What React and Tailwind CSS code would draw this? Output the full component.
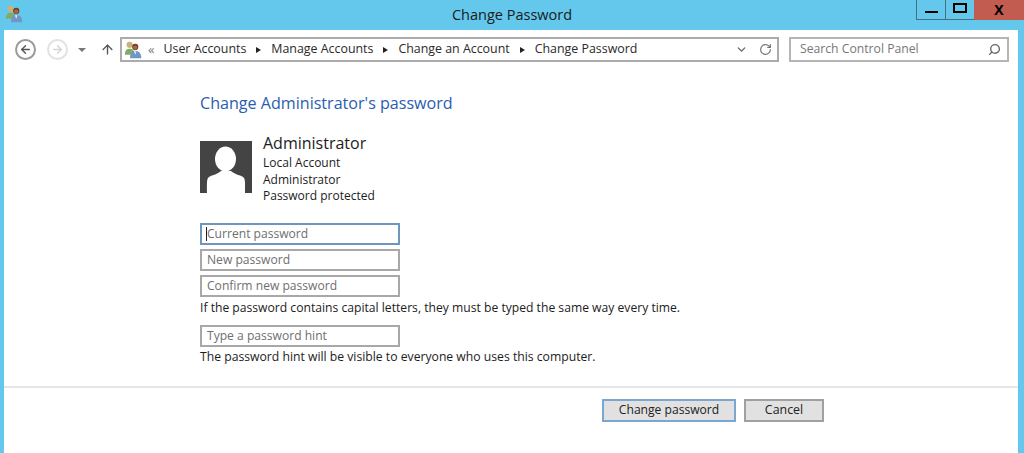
import React from 'react';
import { ArrowLeft, ArrowRight, ArrowUp, ChevronDown, RotateCw, Search } from 'lucide-react';

const UsersIcon = ({ size = 19 }) => (
  <svg width={size} height={size} viewBox="0 0 22 22">
    <circle cx="6.5" cy="5.5" r="3.6" fill="#c9b27a" />
    <path d="M1 17c0-5 2-7 5.5-7S12 12 12 17z" fill="#7fae62" />
    <circle cx="13" cy="8" r="3.6" fill="#6b3f28" />
    <circle cx="13" cy="8.8" r="2.5" fill="#a9683f" />
    <path d="M7 21c0-6 2.500-8.500 6-8.500S20 15 20 21z" fill="#6f96c4" />
    <path d="M11.500 13h3l-1.500 4z" fill="#e6eef6" />
  </svg>
);

const Avatar = () => (
  <svg width="52" height="52" viewBox="0 0 52 52" className="shrink-0">
    <rect width="52" height="52" fill="#444444" />
    <ellipse cx="25.500" cy="18" rx="10.500" ry="12.500" fill="#ffffff" />
    <path d="M7 52c0-5-.5-13 1-15 2-3 9-3 13-7h10c4 4 11 4 13 7 1.500 2 1 10 1 15z" fill="#ffffff" />
  </svg>
);

const Crumb = ({ children }) => (
  <>
    <span>{children}</span>
    <span className="mx-[10px] w-0 h-0 border-y-[3.5px] border-y-transparent border-l-[5px] border-l-[#222222]" />
  </>
);

const PasswordField = ({ placeholder, focused }) => (
  <div className="relative">
    <input
      type="text"
      placeholder={placeholder}
      className={`block w-[200px] h-[22px] px-[5px] bg-white border-2 text-[12.1px] outline-none placeholder:text-[#6f6f6f] ${focused ? 'border-[#6f96bd]' : 'border-[#a8a8a8]'}`}
    />
    {focused && <span className="absolute left-[6px] top-[4px] w-px h-[14px] bg-[#222222]" />}
  </div>
);

export default function App() {
  return (
    <div className="flex flex-col h-[453px] w-full overflow-hidden bg-[#64c8ec] font-['Open_Sans',sans-serif] text-[#1c1c1c]">
      {/* title bar */}
      <div className="relative flex items-center justify-center h-[30px] shrink-0">
        <span className="absolute left-[5px] top-[4px]"><UsersIcon /></span>
        <span className="text-[14.5px] text-[#1a1a1a]">Change Password</span>
        <div className="absolute right-0 top-0 flex h-[20px]">
          <div className="flex items-end justify-center pb-[6px] w-[30px] border border-t-0 border-[#4a6f80]">
            <span className="w-[13px] h-[2.500px] bg-black" />
          </div>
          <div className="flex items-start justify-center pt-[3px] w-[28px] border-b border-[#4a6f80]">
            <span className="w-[14px] h-[10px] border-[2.500px] border-black" />
          </div>
          <div className="flex items-center justify-center w-[50px] pb-[1px] bg-[#c25b50] text-[14px] font-bold text-black leading-none">X</div>
        </div>
      </div>

      {/* window body */}
      <div className="flex flex-col flex-1 ml-[4px] mr-[6px] bg-white">
        {/* toolbar */}
        <div className="flex items-center h-[38px] pt-[1px] pl-[11px] shrink-0">
          <span className="flex items-center justify-center w-[21px] h-[21px] rounded-full border-2 border-[#9a9a9a] text-[#555555]">
            <ArrowLeft size={13} strokeWidth={2.500} />
          </span>
          <span className="flex items-center justify-center w-[21px] h-[21px] ml-[11px] rounded-full border-2 border-[#e2e2e2] text-[#d4d4d4]">
            <ArrowRight size={13} strokeWidth={2.500} />
          </span>
          <span className="ml-[10px] w-0 h-0 border-x-[4px] border-x-transparent border-t-[4px] border-t-[#777777]" />
          <ArrowUp size={15} strokeWidth={2.200} className="ml-[14px] text-[#555555]" />
          <div className="flex items-center w-[659px] h-[25px] ml-[5px] pl-[2px] pr-[5px] border-2 border-[#ababab] text-[12.4px] text-[#2a2a2a]">
            <UsersIcon />
            <span className="ml-[5px] mr-[9px] text-[#777777] text-[13px] leading-none">«</span>
            <Crumb>User Accounts</Crumb>
            <Crumb>Manage Accounts</Crumb>
            <Crumb>Change an Account</Crumb>
            <span>Change Password</span>
            <ChevronDown size={13} strokeWidth={2.500} className="ml-auto text-[#666666]" />
            <RotateCw size={13} strokeWidth={2.200} className="ml-[11px] text-[#777777]" />
          </div>
          <div className="flex items-center justify-between w-[220px] h-[25px] ml-[10px] pl-[9px] pr-[6px] border-2 border-[#b5b5b5] text-[12.2px] text-[#777777]">
            <span>Search Control Panel</span>
            <Search size={13} strokeWidth={2.500} className="-scale-x-100 text-[#666666]" />
          </div>
        </div>

        {/* form */}
        <div className="flex flex-col pl-[196px] pt-[23px] h-[318px] shrink-0">
          <h1 className="text-[16.1px] leading-[24px] font-normal text-[#2a5db0]">Change Administrator's password</h1>
          <div className="flex mt-[17px]">
            <div className="pt-[9px]"><Avatar /></div>
            <div className="ml-[11px] text-[12px] leading-[16.500px]">
              <div className="text-[16px] leading-[23px]">Administrator</div>
              <div>Local Account</div>
              <div>Administrator</div>
              <div>Password protected</div>
            </div>
          </div>
          <div className="flex flex-col gap-[4px] mt-[18px]">
            <PasswordField placeholder="Current password" focused />
            <PasswordField placeholder="New password" />
            <PasswordField placeholder="Confirm new password" />
          </div>
          <p className="mt-[2px] text-[12.15px] leading-[17px]">If the password contains capital letters, they must be typed the same way every time.</p>
          <div className="mt-[9px]"><PasswordField placeholder="Type a password hint" /></div>
          <p className="mt-[1px] text-[12.2px] leading-[17px]">The password hint will be visible to everyone who uses this computer.</p>
        </div>

        {/* footer */}
        <div className="flex justify-start gap-[8px] pl-[598px] pt-[11px] border-t-2 border-[#e6e6e6]">
          <button className="w-[134px] h-[23px] bg-[#e1e1e1] border-2 border-[#7ba6d0] text-[12.1px] text-[#222222]">Change password</button>
          <button className="w-[80px] h-[23px] bg-[#e1e1e1] border-2 border-[#a0a0a0] text-[12.4px] text-[#222222]">Cancel</button>
        </div>
      </div>
    </div>
  );
}
